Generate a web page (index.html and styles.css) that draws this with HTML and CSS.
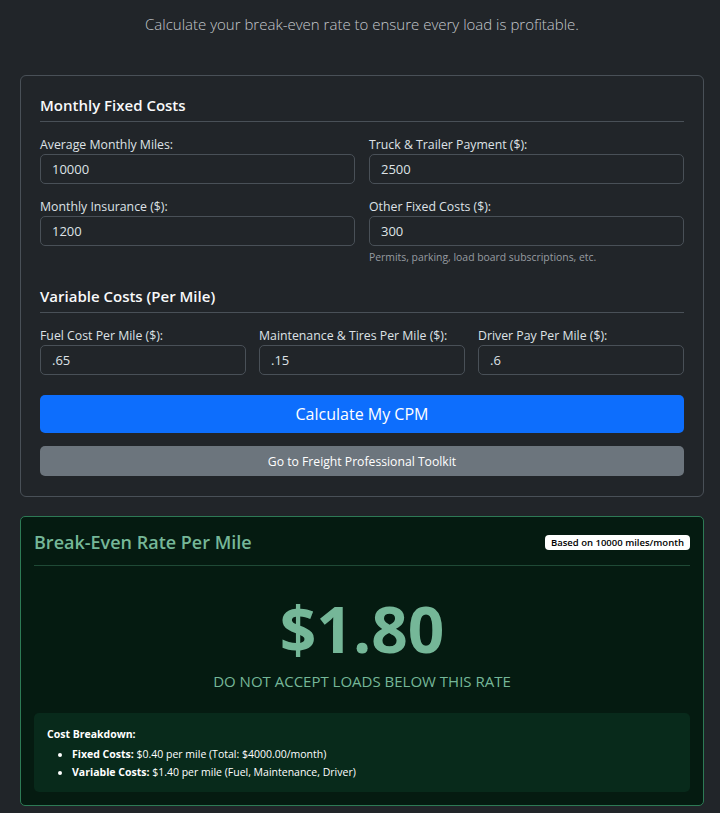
FILE: index.html
```html
<!DOCTYPE html>
<html lang="en">
<head>
    <meta charset="UTF-8">
    <meta name="viewport" content="width=device-width, initial-scale=1.0">
    <title>Cost Per Mile Calculator</title>
    <link rel="stylesheet" href="styles.css">
</head>
<body>
    <div class="page">
        <p class="lead">Calculate your break-even rate to ensure every load is profitable.</p>

        <div class="card">
            <h5 class="section-title">Monthly Fixed Costs</h5>
            <div class="grid two">
                <div class="field">
                    <label for="miles">Average Monthly Miles:</label>
                    <input id="miles" type="text" value="10000">
                </div>
                <div class="field">
                    <label for="truck">Truck &amp; Trailer Payment ($):</label>
                    <input id="truck" type="text" value="2500">
                </div>
                <div class="field">
                    <label for="insurance">Monthly Insurance ($):</label>
                    <input id="insurance" type="text" value="1200">
                </div>
                <div class="field">
                    <label for="other">Other Fixed Costs ($):</label>
                    <input id="other" type="text" value="300">
                    <small class="help">Permits, parking, load board subscriptions, etc.</small>
                </div>
            </div>

            <h5 class="section-title second">Variable Costs (Per Mile)</h5>
            <div class="grid three">
                <div class="field">
                    <label for="fuel">Fuel Cost Per Mile ($):</label>
                    <input id="fuel" type="text" value=".65">
                </div>
                <div class="field">
                    <label for="maint">Maintenance &amp; Tires Per Mile ($):</label>
                    <input id="maint" type="text" value=".15">
                </div>
                <div class="field">
                    <label for="driver">Driver Pay Per Mile ($):</label>
                    <input id="driver" type="text" value=".6">
                </div>
            </div>

            <button class="btn btn-primary" onclick="calculate()">Calculate My CPM</button>
            <button class="btn btn-secondary">Go to Freight Professional Toolkit</button>
        </div>

        <div class="result">
            <div class="result-header">
                <h4>Break-Even Rate Per Mile</h4>
                <span class="badge" id="badge">Based on 10000 miles/month</span>
            </div>
            <div class="rate" id="rate">$1.80</div>
            <p class="warning">DO NOT ACCEPT LOADS BELOW THIS RATE</p>
            <div class="breakdown">
                <strong>Cost Breakdown:</strong>
                <ul>
                    <li><strong>Fixed Costs:</strong> <span id="fixedText">$0.40 per mile (Total: $4000.00/month)</span></li>
                    <li><strong>Variable Costs:</strong> <span id="varText">$1.40 per mile (Fuel, Maintenance, Driver)</span></li>
                </ul>
            </div>
        </div>
    </div>

    <script>
        function val(id) {
            return parseFloat(document.getElementById(id).value) || 0;
        }

        // Work out the break-even rate
        function calculate() {
            const miles = val('miles');
            if (miles <= 0) return;

            const fixedTotal = val('truck') + val('insurance') + val('other');
            const fixedPerMile = fixedTotal / miles;
            const variable = val('fuel') + val('maint') + val('driver');

            document.getElementById('rate').textContent = '$' + (fixedPerMile + variable).toFixed(2);
            document.getElementById('badge').textContent = 'Based on ' + miles + ' miles/month';
            document.getElementById('fixedText').textContent =
                '$' + fixedPerMile.toFixed(2) + ' per mile (Total: $' + fixedTotal.toFixed(2) + '/month)';
            document.getElementById('varText').textContent =
                '$' + variable.toFixed(2) + ' per mile (Fuel, Maintenance, Driver)';
        }
    </script>
</body>
</html>
```

FILE: styles.css
```css
* {
    margin: 0;
    padding: 0;
    box-sizing: border-box;
}

body {
    font-family: "Open Sans", "Noto Sans", sans-serif;
    background: #212529;
    color: #dee2e6;
    font-size: 13px;
}

.page {
    padding: 12px 16px 8px 20px;
}

.lead {
    text-align: center;
    font-size: 15px;
    font-weight: 300;
    line-height: 24px;
    color: #c4c8cc;
    margin-bottom: 39px;
}

.card {
    border: 1px solid #495057;
    border-radius: 6px;
    padding: 19px 19px 20px;
}

.section-title {
    font-size: 15px;
    font-weight: 600;
    line-height: 20px;
    color: #f8f9fa;
    padding-bottom: 6px;
    border-bottom: 1px solid #495057;
    margin-bottom: 14px;
}

.section-title.second {
    margin-top: 22px;
}

.grid {
    display: grid;
    column-gap: 14px;
    row-gap: 14px;
}

.grid.two {
    grid-template-columns: 1fr 1fr;
}

.grid.three {
    grid-template-columns: 1fr 1fr 1fr;
    column-gap: 13px;
}

.field {
    display: flex;
    flex-direction: column;
}

label {
    font-size: 12.3px;
    line-height: 18px;
    color: #dee2e6;
}

input {
    height: 30px;
    background: #212529;
    border: 1px solid #495057;
    border-radius: 5px;
    color: #dee2e6;
    font-family: inherit;
    font-size: 13px;
    padding: 0 11px;
}

.help {
    font-size: 10.4px;
    line-height: 14px;
    color: #979ca1;
    margin-top: 4px;
}

.btn {
    display: block;
    width: 100%;
    border: none;
    border-radius: 5px;
    color: #fff;
    font-family: inherit;
    cursor: pointer;
}

.btn-primary {
    height: 38px;
    margin-top: 20px;
    background: #0d6efd;
    font-size: 16px;
}

.btn-secondary {
    height: 30px;
    margin-top: 13px;
    background: #6c757d;
    font-size: 12.2px;
}

.result {
    margin-top: 19px;
    border: 1px solid #2d7a55;
    border-radius: 5px;
    background: #051b11;
    padding: 13px;
    color: #75b798;
}

.result-header {
    display: flex;
    justify-content: space-between;
    align-items: center;
    padding-bottom: 11px;
    border-bottom: 1px solid #1f4a36;
}

.result-header h4 {
    font-size: 18px;
    font-weight: 600;
    line-height: 24px;
}

.badge {
    background: #fff;
    color: #000;
    font-size: 9.5px;
    font-weight: 600;
    line-height: 15px;
    padding: 0 6px;
    border-radius: 4px;
}

.rate {
    text-align: center;
    font-size: 64px;
    font-weight: 700;
    line-height: 77px;
    margin-top: 24px;
}

.warning {
    text-align: center;
    font-size: 15px;
    line-height: 20px;
    margin-top: 4px;
    margin-bottom: 22px;
}

.breakdown {
    background: #082a1b;
    border-radius: 5px;
    padding: 12px 13px 11px;
    color: #fff;
    font-size: 10.5px;
    line-height: 18px;
}

.breakdown ul {
    padding-left: 25px;
    margin-top: 2px;
}
```
